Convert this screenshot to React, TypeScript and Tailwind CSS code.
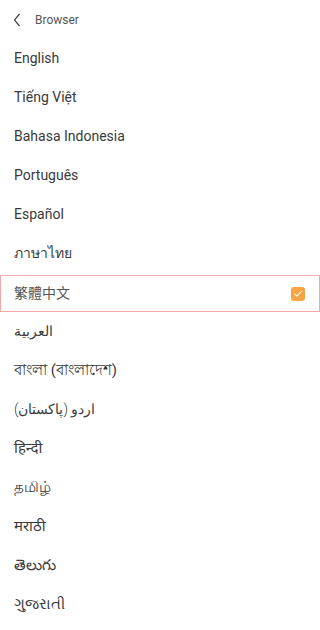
import { Check } from 'lucide-react';

const langs: { t: string; c?: string }[] = [
  { t: 'English' },
  { t: 'Tiếng Việt' },
  { t: 'Bahasa Indonesia' },
  { t: 'Português' },
  { t: 'Español' },
  { t: 'ภาษาไทย' },
  { t: '繁體中文' },
  { t: 'العربية', c: 'text-[12px] font-light' },
  { t: 'বাংলা (বাংলাদেশ)', c: 'text-[15px]' },
  { t: 'اردو (پاکستان)', c: 'text-[13px] font-light' },
  { t: 'हिन्दी', c: 'text-[15px]' },
  { t: 'தமிழ்', c: 'text-[15px]' },
  { t: 'मराठी', c: 'text-[15px]' },
  { t: 'తెలుగు', c: 'text-[15px]' },
  { t: 'ગુજરાતી', c: 'text-[15px]' },
];

export default function App() {
  return (
    <div
      className="w-[320px] h-[630px] overflow-hidden bg-white text-[#3a3a3a]"
      style={{ fontFamily: 'Roboto, "Noto Sans", "Noto Sans CJK TC", "DejaVu Sans", sans-serif' }}
    >
      <div className="h-[39px] flex items-center pl-[13px] text-[12px] text-[#555]">
        <svg width="8" height="14" viewBox="0 0 8 14" fill="none" stroke="#444" strokeWidth="1.2">
          <path d="M6.5 1 L1.5 7 L6.5 13" />
        </svg>
        <span className="ml-[14px]">Browser</span>
      </div>
      {langs.map((l, i) =>
        i === 6 ? (
          <div
            key={i}
            className="h-[37px] mt-[2px] flex items-center justify-between pl-[13px] pr-[14px] border border-[#f1a7a7] text-[14px] text-[#555]"
          >
            <span>{l.t}</span>
            <span className="w-[14px] h-[14px] rounded-[3px] bg-[#f7a443] flex items-center justify-center">
              <Check size={10} color="white" strokeWidth={2.5} />
            </span>
          </div>
        ) : (
          <div key={i} className={`h-[39px] flex items-center pl-[14px] text-[14px] ${l.c ?? ''}`}>
            {l.t}
          </div>
        ),
      )}
    </div>
  );
}
